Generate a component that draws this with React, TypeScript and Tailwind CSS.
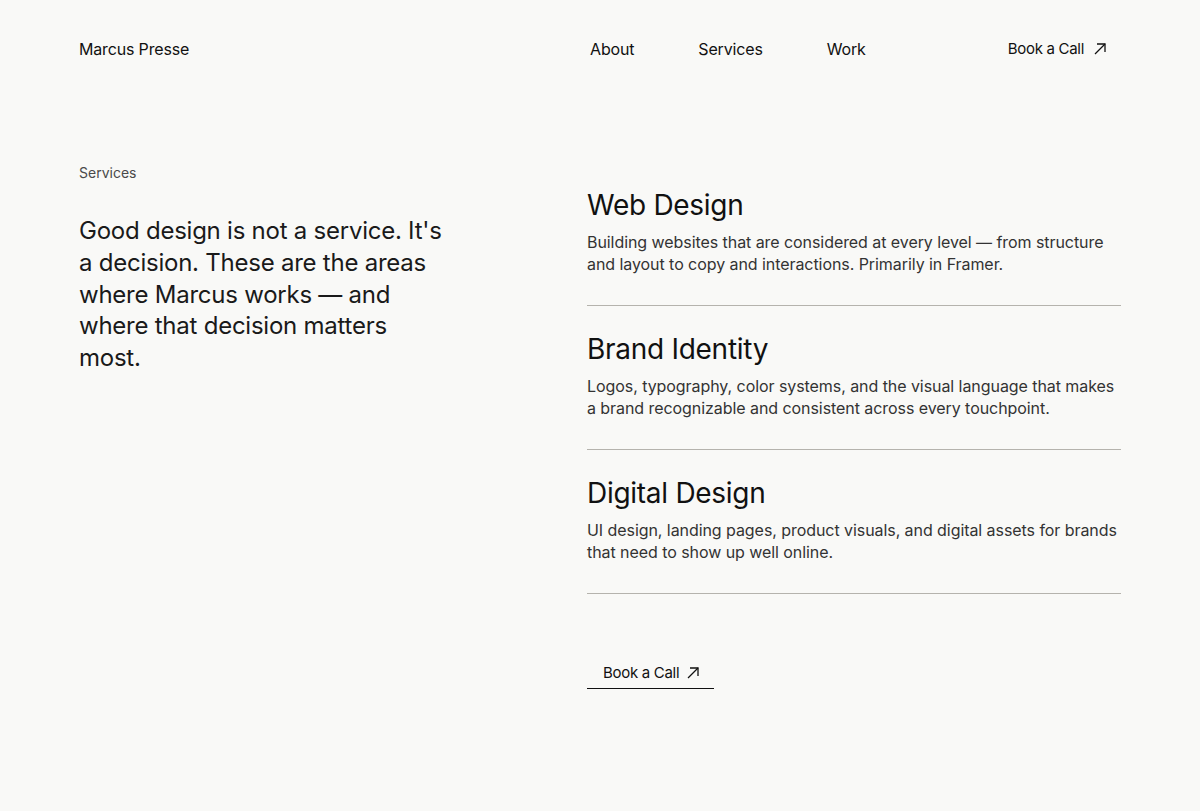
import React from 'react';

const services = [
  {
    title: 'Web Design',
    text: 'Building websites that are considered at every level — from structure and layout to copy and interactions. Primarily in Framer.',
  },
  {
    title: 'Brand Identity',
    text: 'Logos, typography, color systems, and the visual language that makes a brand recognizable and consistent across every touchpoint.',
  },
  {
    title: 'Digital Design',
    text: 'UI design, landing pages, product visuals, and digital assets for brands that need to show up well online.',
  },
];

const Arrow: React.FC = () => (
  <svg width="12" height="12" viewBox="0 0 12 12" fill="none" stroke="currentColor" strokeWidth="1.3">
    <path d="M1 11 L11 1" />
    <path d="M3 1 H11 V9" />
  </svg>
);

const App: React.FC = () => {
  return (
    <div
      className="min-h-screen bg-[#f9f9f7] text-[#111111] px-[79px]"
      style={{ fontFamily: 'Inter, "Liberation Sans", sans-serif' }}
    >
      {/* header */}
      <header className="grid grid-cols-[508px_1fr] h-[98px] items-center">
        <div className="text-base leading-[22px] tracking-[-0.01em]">Marcus Presse</div>
        <div className="flex items-center justify-between">
          <nav className="flex gap-16 pl-[3px] text-base leading-[22px] tracking-[-0.01em]">
            <a>About</a>
            <a>Services</a>
            <a>Work</a>
          </nav>
          <a className="flex items-center gap-[10px] pl-4 pr-[15px] text-[15px] leading-[22px] tracking-[-0.02em]">
            Book a Call
            <Arrow />
          </a>
        </div>
      </header>

      {/* services */}
      <main className="grid grid-cols-[508px_1fr] pt-[65px]">
        <div>
          <p className="text-sm leading-5 text-[#4a4a4a]">Services</p>
          <h2 className="mt-[32px] max-w-[370px] text-[24px] leading-[31.75px] tracking-[-0.01em] text-[#1a1a1a]">
            Good design is not a service. It's a decision. These are the areas where Marcus works — and where that decision matters most.
          </h2>
        </div>

        <div className="pt-[25px]">
          {services.map((s, i) => (
            <div key={s.title} className={`border-b border-[#b5b3ad] pb-[30px] ${i > 0 ? 'pt-[26px]' : ''}`}>
              <h3 className="text-[28px] leading-[34px] tracking-[-0.01em]">{s.title}</h3>
              <p className="mt-[9px] text-base leading-[22px] tracking-[-0.004em] text-[#333333]">{s.text}</p>
            </div>
          ))}

          <a className="mt-16 inline-flex items-center gap-2 border-b border-[#111111] pl-4 pr-[15px] pt-1 pb-1 text-[15px] leading-[22px] tracking-[-0.02em]">
            Book a Call
            <Arrow />
          </a>
        </div>
      </main>
    </div>
  );
};

export default App;
